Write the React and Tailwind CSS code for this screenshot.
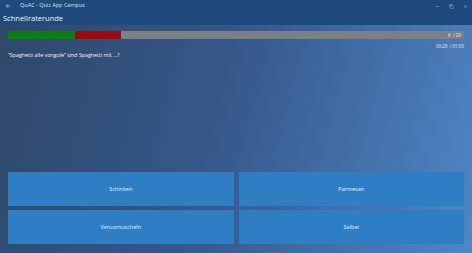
import { ArrowLeft, Minus, Copy, X } from 'lucide-react'

const answers = ['Schinken', 'Parmesan', 'Venusmuscheln', 'Salbei']

export default function App() {
  return (
    <div className="flex h-[253px] w-full flex-col overflow-hidden font-['Open_Sans',sans-serif] text-white">
      {/* Header */}
      <div className="flex h-[25px] flex-col bg-[#1f4a7e]">
        <div className="flex h-[11px] items-center pt-[1px]">
          <ArrowLeft size={6} strokeWidth={2} className="ml-[5px] text-[#dbe6f2]" />
          <span className="ml-[9px] text-[5.5px] leading-none text-[#dbe6f2]">QuAC - Quiz App Campus</span>
          <div className="ml-auto flex items-center gap-[9px] pr-[4px] text-[#dbe6f2]">
            <Minus size={5} strokeWidth={1.5} />
            <Copy size={5} strokeWidth={1.5} />
            <X size={5} strokeWidth={1.5} />
          </div>
        </div>
        <div className="pl-[3px] pt-[1px] text-[7.5px] leading-[12px] text-[#f0f4f8]">Schnellraterunde</div>
      </div>

      {/* Content */}
      <div className="flex flex-1 flex-col bg-[linear-gradient(105deg,#2d4869_0%,#36578a_45%,#4f86c6_100%)] px-[8px] pb-[9px] pt-[6px]">
        <div className="relative flex h-[8px] w-full bg-[#7b7f86]">
          <div className="h-full w-[67px] bg-[#0b7d12]" />
          <div className="h-full w-[46px] bg-[#9a0b0b]" />
          <span className="absolute right-[3px] top-0 text-[4.5px] leading-[8px] text-[#eef2f6]">6 &nbsp;/ 20</span>
        </div>
        <div className="mt-[4px] text-right text-[4.5px] leading-[6px] text-[#e4ecf6]">00:29 &nbsp;/ 01:00</div>
        <div className="mt-[2px] text-[5.3px] leading-[8px] text-[#f2f5f8]">“Spaghetti alle vongole” sind Spaghetti mit ...?</div>
        <div className="flex-1" />
        <div className="grid grid-cols-2 gap-x-[5px] gap-y-[4px]">
          {answers.map((a) => (
            <div
              key={a}
              className="flex h-[34px] items-center justify-center bg-[#2f7dc3] text-[5.5px] text-[#e6f0fa]"
            >
              {a}
            </div>
          ))}
        </div>
      </div>
    </div>
  )
}
